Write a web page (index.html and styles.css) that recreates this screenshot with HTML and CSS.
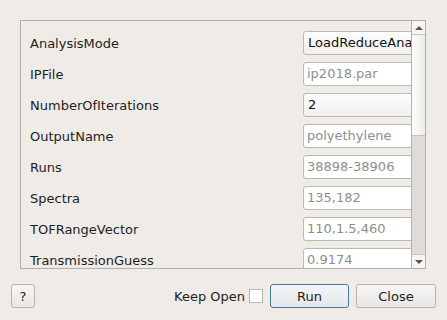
FILE: index.html
```html
<!DOCTYPE html>
<html>

<head>
  <meta charset="UTF-8" />
  <title>LoadReduceAnalysis</title>
  <link rel="stylesheet" href="styles.css">
</head>

<body>
  <div class="dialog">
    <!-- Property list -->
    <div class="scroll-frame">
      <div class="props">
        <div class="prop-row">
          <span class="prop-name">AnalysisMode</span>
          <div class="field combo">LoadReduceAnalysis</div>
        </div>
        <div class="prop-row">
          <span class="prop-name">IPFile</span>
          <div class="field placeholder">ip2018.par</div>
        </div>
        <div class="prop-row">
          <span class="prop-name">NumberOfIterations</span>
          <div class="field combo">2</div>
        </div>
        <div class="prop-row">
          <span class="prop-name">OutputName</span>
          <div class="field placeholder">polyethylene</div>
        </div>
        <div class="prop-row">
          <span class="prop-name">Runs</span>
          <div class="field placeholder">38898-38906</div>
        </div>
        <div class="prop-row">
          <span class="prop-name">Spectra</span>
          <div class="field placeholder">135,182</div>
        </div>
        <div class="prop-row">
          <span class="prop-name">TOFRangeVector</span>
          <div class="field placeholder">110,1.5,460</div>
        </div>
        <div class="prop-row">
          <span class="prop-name">TransmissionGuess</span>
          <div class="field placeholder">0.9174</div>
        </div>
      </div>

      <div class="scrollbar">
        <div class="sb-arrow"><span class="tri-up"></span></div>
        <div class="sb-handle"></div>
        <div class="sb-groove"></div>
        <div class="sb-arrow down"><span class="tri-down"></span></div>
      </div>
    </div>

    <!-- Buttons -->
    <div class="footer">
      <button class="help-btn">?</button>
      <div class="spacer"></div>
      <label class="keep-open">Keep Open <span class="checkbox"></span></label>
      <button class="default-btn">Run</button>
      <button>Close</button>
    </div>
  </div>
</body>

</html>
```

FILE: styles.css
```css
body {
  margin: 0;
  font-family: "DejaVu Sans", sans-serif;
  font-size: 13px;
  color: #1e1e1e;
  background-color: #efebe7;
}

.dialog {
  width: 447px;
  height: 320px;
  box-sizing: border-box;
  padding: 20px 0 0 0;
}

.scroll-frame {
  margin: 0 21px 0 20px;
  height: 249px;
  box-sizing: border-box;
  border: 1px solid #b4b0ab;
  display: flex;
  overflow: hidden;
}

.props {
  flex: 1;
  overflow: hidden;
  padding: 10px 0 0 9px;
  display: flex;
  flex-direction: column;
  gap: 7px;
}

.prop-row {
  display: flex;
  align-items: center;
  height: 24px;
  flex-shrink: 0;
}

.prop-name {
  width: 273px;
  flex-shrink: 0;
  white-space: nowrap;
}

.field {
  width: 130px;
  height: 24px;
  flex-shrink: 0;
  box-sizing: border-box;
  border: 1px solid #bcb8b3;
  border-radius: 3px;
  background-color: #fff;
  padding: 0 0 0 4px;
  line-height: 22px;
  white-space: nowrap;
  overflow: hidden;
}

.field.placeholder {
  color: #8e8e8e;
  padding-left: 3px;
}

.field.combo {
  background: linear-gradient(#fdfdfd, #f0efee);
  color: #111;
}

/* Scrollbar */
.scrollbar {
  width: 13px;
  flex-shrink: 0;
  border-left: 1px solid #b4b0ab;
  display: flex;
  flex-direction: column;
  background-color: #dedcd9;
}

.sb-arrow {
  height: 13px;
  background-color: #f6f5f4;
  border-bottom: 1px solid #c9c6c2;
  display: flex;
  justify-content: center;
  align-items: center;
}

.sb-arrow.down {
  border-bottom: none;
  border-top: 1px solid #c9c6c2;
}

.tri-up {
  width: 0;
  height: 0;
  border-left: 4px solid transparent;
  border-right: 4px solid transparent;
  border-bottom: 4px solid #555;
}

.tri-down {
  width: 0;
  height: 0;
  border-left: 4px solid transparent;
  border-right: 4px solid transparent;
  border-top: 4px solid #555;
}

.sb-handle {
  height: 100px;
  background: linear-gradient(to right, #fdfdfd, #ecebea);
  border-bottom: 1px solid #c4c1bd;
}

.sb-groove {
  flex: 1;
}

/* Footer */
.footer {
  display: flex;
  align-items: center;
  margin-top: 15px;
  padding: 0 11px;
  gap: 7px;
}

.spacer {
  flex: 1;
}

button {
  font-family: "DejaVu Sans", sans-serif;
  font-size: 13px;
  color: #1e1e1e;
  height: 24px;
  width: 80px;
  padding: 0;
  border: 1px solid #b6b2ad;
  border-radius: 3px;
  background: linear-gradient(#f7f6f5, #e9e7e4);
}

.help-btn {
  width: 24px;
}

.default-btn {
  width: 79px;
  border-color: #3f79a8;
  background: linear-gradient(#f4f5f6, #e5e8ea);
}

.keep-open {
  display: flex;
  align-items: center;
  gap: 4px;
}

.checkbox {
  width: 12px;
  height: 12px;
  border: 1px solid #b6b2ad;
  background-color: #fff;
}
```
